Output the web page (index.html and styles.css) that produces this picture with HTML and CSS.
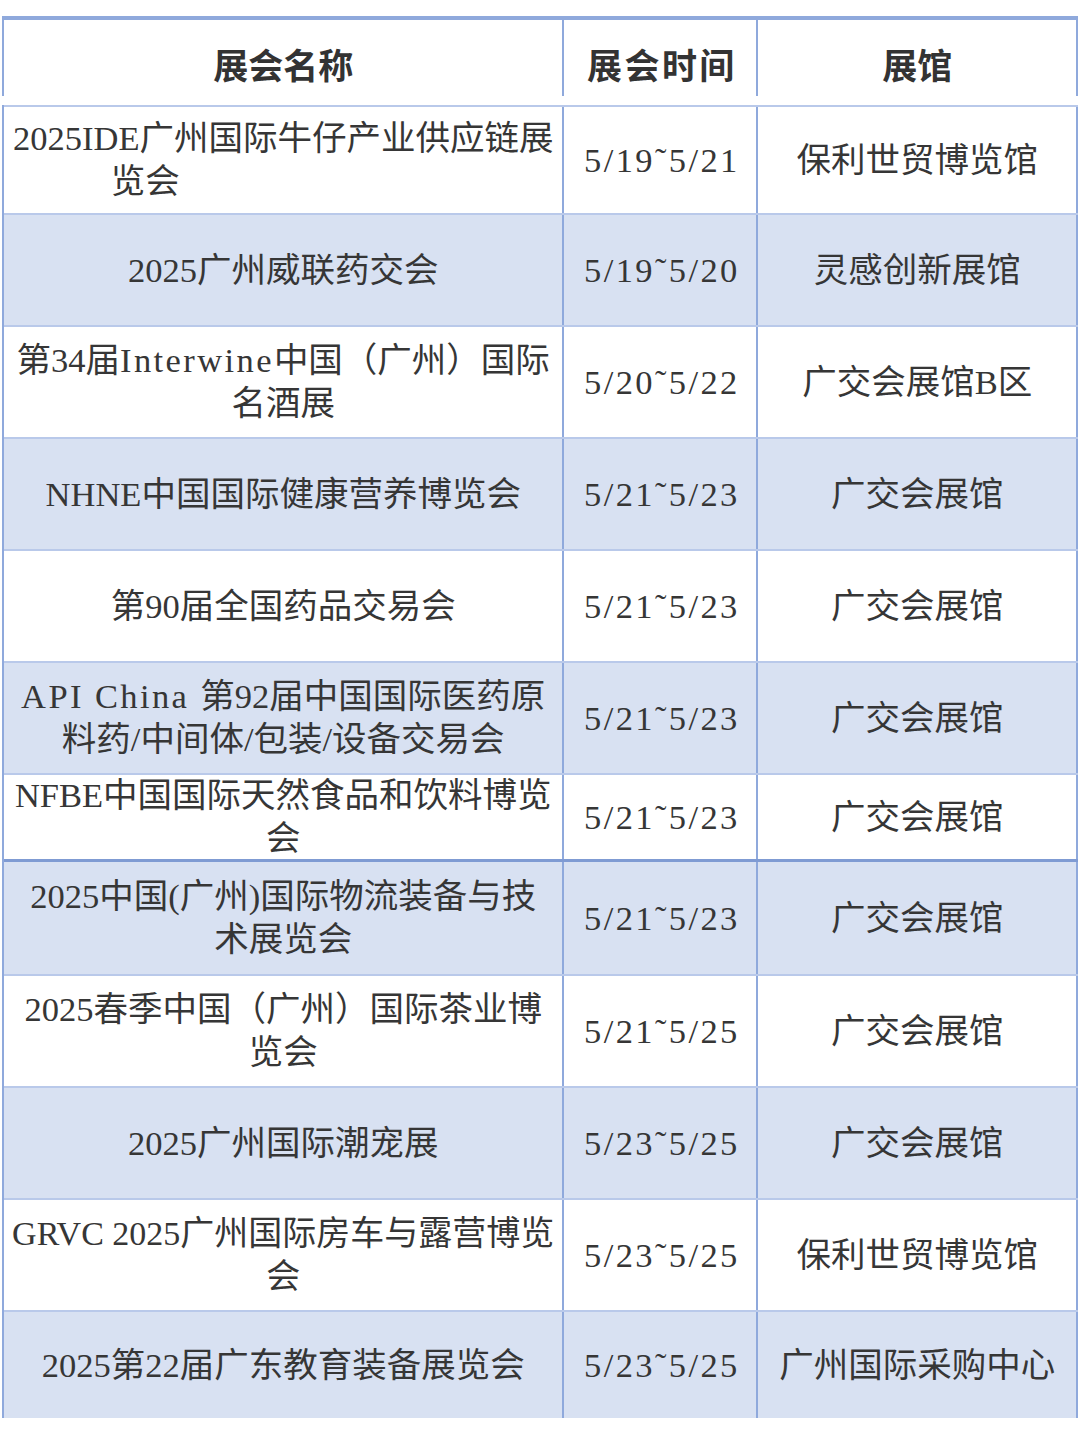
FILE: index.html
```html
<!DOCTYPE html>
<html lang="zh-CN">
<head>
<meta charset="utf-8">
<title>展会列表</title>
<link rel="stylesheet" href="styles.css">
</head>
<body>
<div class="sheet">
  <div class="head">
    <div class="cell c1">展会名称</div>
    <div class="cell c2">展会时间</div>
    <div class="cell c3">展馆</div>
  </div>
  <div class="body">
    <div class="row edge">
      <div class="cell c1"><div class="lines">2025IDE广州国际牛仔产业供应链展<span class="off">览会</span></div></div>
      <div class="cell c2">5/19˜5/21</div>
      <div class="cell c3">保利世贸博览馆</div>
    </div>
    <div class="row alt">
      <div class="cell c1"><div class="lines">2025广州威联药交会</div></div>
      <div class="cell c2">5/19˜5/20</div>
      <div class="cell c3">灵感创新展馆</div>
    </div>
    <div class="row">
      <div class="cell c1"><div class="lines">第34届<span class="lat">Interwine</span>中国（广州）国际<br>名酒展</div></div>
      <div class="cell c2">5/20˜5/22</div>
      <div class="cell c3">广交会展馆B区</div>
    </div>
    <div class="row alt">
      <div class="cell c1"><div class="lines">NHNE中国国际健康营养博览会</div></div>
      <div class="cell c2">5/21˜5/23</div>
      <div class="cell c3">广交会展馆</div>
    </div>
    <div class="row">
      <div class="cell c1"><div class="lines">第90届全国药品交易会</div></div>
      <div class="cell c2">5/21˜5/23</div>
      <div class="cell c3">广交会展馆</div>
    </div>
    <div class="row alt">
      <div class="cell c1"><div class="lines"><span class="lat">API China </span>第92届中国国际医药原<br>料药/中间体/包装/设备交易会</div></div>
      <div class="cell c2">5/21˜5/23</div>
      <div class="cell c3">广交会展馆</div>
    </div>
    <div class="row short">
      <div class="cell c1"><div class="lines">NFBE中国国际天然食品和饮料博览<br>会</div></div>
      <div class="cell c2">5/21˜5/23</div>
      <div class="cell c3">广交会展馆</div>
    </div>
    <div class="row alt thick">
      <div class="cell c1"><div class="lines">2025中国(广州)国际物流装备与技<br>术展览会</div></div>
      <div class="cell c2">5/21˜5/23</div>
      <div class="cell c3">广交会展馆</div>
    </div>
    <div class="row">
      <div class="cell c1"><div class="lines">2025春季中国（广州）国际茶业博<br>览会</div></div>
      <div class="cell c2">5/21˜5/25</div>
      <div class="cell c3">广交会展馆</div>
    </div>
    <div class="row alt">
      <div class="cell c1"><div class="lines">2025广州国际潮宠展</div></div>
      <div class="cell c2">5/23˜5/25</div>
      <div class="cell c3">广交会展馆</div>
    </div>
    <div class="row">
      <div class="cell c1"><div class="lines tight">GRVC 2025广州国际房车与露营博览<br>会</div></div>
      <div class="cell c2">5/23˜5/25</div>
      <div class="cell c3">保利世贸博览馆</div>
    </div>
    <div class="row alt edge">
      <div class="cell c1"><div class="lines">2025第22届广东教育装备展览会</div></div>
      <div class="cell c2">5/23˜5/25</div>
      <div class="cell c3">广州国际采购中心</div>
    </div>
  </div>
</div>
</body>
</html>
```

FILE: styles.css
```css
html, body {
  margin: 0;
  padding: 0;
  background: #ffffff;
}

body {
  font-family: "Liberation Serif", "Noto Sans CJK SC", serif;
  color: #363636;
}

.sheet {
  padding: 16px 0 0 2px;
  width: 1076px;
}

.head {
  display: flex;
  height: 80px;
  border-top: 4px solid #8fa9dc;
  border-left: 2px solid #8fa9dc;
  box-sizing: border-box;
  margin-bottom: 9px;
}

.head .cell {
  font-family: "Noto Sans CJK SC", sans-serif;
  font-weight: 700;
  font-size: 35px;
  color: #333333;
  padding-top: 10px;
}

.body {
  display: flex;
  flex-direction: column;
  border-left: 2px solid #8fa9dc;
}

.row {
  display: flex;
  height: 112px;
  border-top: 2px solid #b9c9ea;
  box-sizing: border-box;
  background: #ffffff;
}

.row.alt {
  background: #d8e1f2;
}

.row.edge {
  height: 108px;
}

.row.short {
  height: 86px;
}

.row.thick {
  height: 115px;
  border-top: 3px solid #7f9bd3;
}

.cell {
  display: flex;
  align-items: center;
  justify-content: center;
  text-align: center;
  white-space: nowrap;
  box-sizing: border-box;
  font-size: 34.5px;
  line-height: 43px;
  border-right: 2px solid #8fa9dc;
}

.lines {
  text-align: center;
}

.lines.tight {
  font-size: 34px;
}

.off {
  display: block;
  margin-right: 276px;
}

.lat {
  letter-spacing: 2.4px;
}

.c1 {
  width: 561px;
}

.c2 {
  width: 194px;
  letter-spacing: 2.4px;
  padding-left: 3px;
}

.c3 {
  width: 320px;
}
```
